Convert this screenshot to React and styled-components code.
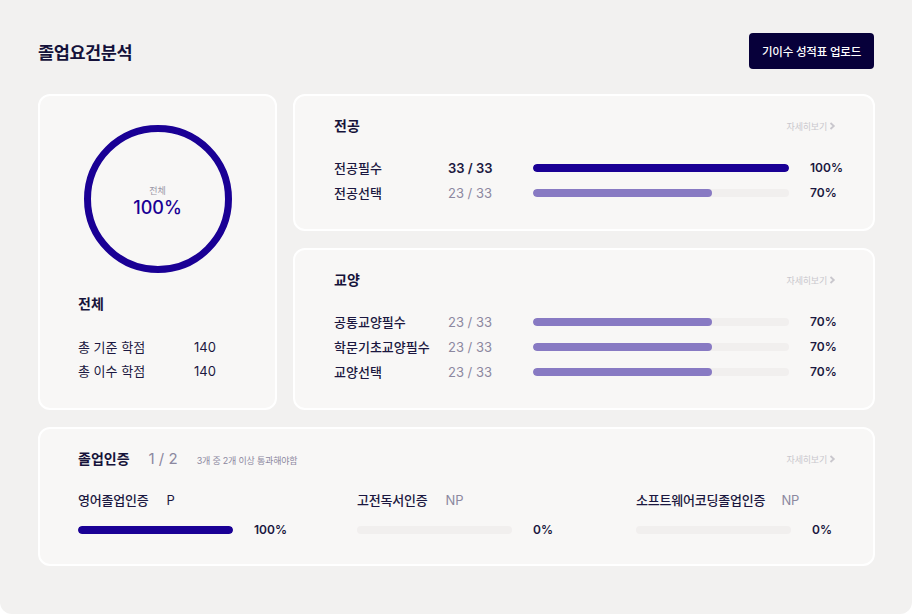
import React from "react";
import styled, { createGlobalStyle } from "styled-components";

const Global = createGlobalStyle`
  html, body { margin: 0; padding: 0; background: #ffffff; }
  body { font-family: Inter, "Noto Sans CJK KR", sans-serif; color: #1b1740; }
  * { box-sizing: border-box; }
`;

const Page = styled.div`
  width: 912px;
  height: 614px;
  background: #f2f1f0;
  border-radius: 0 0 12px 12px;
  padding: 33px 37px 0 38px;
`;

const Header = styled.div`
  display: flex;
  justify-content: space-between;
  align-items: center;
  height: 36px;
  margin-bottom: 25px;
`;

const Title = styled.h1`
  margin: 0;
  font-size: 17.5px;
  font-weight: 600;
  color: #14113a;
  letter-spacing: -0.4px;
`;

const UploadButton = styled.button`
  width: 125px;
  height: 36px;
  margin-right: 1px;
  border: none;
  border-radius: 4px;
  background: #07003a;
  color: #ffffff;
  font-family: inherit;
  font-size: 11.5px;
  font-weight: 500;
  letter-spacing: -0.2px;
`;

const TopGrid = styled.div`
  display: grid;
  grid-template-columns: 239px minmax(0, 1fr);
  gap: 16px;
  margin-bottom: 17px;
`;

const Card = styled.div`
  background: #f8f7f6;
  border: 2px solid #ffffff;
  border-radius: 12px;
  min-width: 0;
`;

const SummaryCard = styled(Card)`
  padding: 29px 38px 0 38px;
  display: flex;
  flex-direction: column;
`;

const RingWrap = styled.div`
  position: relative;
  width: 148px;
  height: 148px;
  align-self: center;
`;

const RingText = styled.div`
  position: absolute;
  inset: 0;
  display: flex;
  flex-direction: column;
  align-items: center;
  justify-content: center;
  padding-top: 5px;
`;

const RingLabel = styled.span`
  font-size: 9px;
  color: #9996a6;
  line-height: 12px;
`;

const RingValue = styled.span`
  font-size: 18px;
  font-weight: 500;
  color: #1a0095;
  line-height: 22px;
`;

const SectionTitle = styled.h2`
  margin: 0;
  font-size: 14px;
  font-weight: 700;
  color: #16133a;
  line-height: 20px;
`;

const SummaryTitle = styled(SectionTitle)`
  margin-top: 21px;
  margin-bottom: 21px;
`;

const SummaryRow = styled.div`
  display: grid;
  grid-template-columns: 116px auto;
  font-size: 13px;
  line-height: 24px;
  color: #1b1740;
`;

const RightColumn = styled.div`
  display: flex;
  flex-direction: column;
  gap: 17px;
  min-width: 0;
`;

const SectionCard = styled(Card)`
  padding: 20px 37px 0 39px;
  height: ${(p) => p.$h}px;
`;

const CardHead = styled.div`
  display: flex;
  justify-content: space-between;
  align-items: center;
  margin-bottom: ${(p) => p.$mb}px;
`;

const More = styled.span`
  display: inline-flex;
  align-items: center;
  gap: 2px;
  font-size: 9px;
  color: #c9c7cd;
  letter-spacing: -0.2px;
`;

const ReqRow = styled.div`
  display: grid;
  grid-template-columns: 114px 85px 256px auto;
  align-items: center;
  height: 25px;
  font-size: 13px;
`;

const ReqLabel = styled.span`
  color: #1b1740;
  font-weight: 500;
`;

const ReqValue = styled.span`
  color: ${(p) => (p.$done ? "#1b1740" : "#8c889f")};
  font-weight: ${(p) => (p.$done ? 600 : 400)};
`;

const Track = styled.div`
  height: 8px;
  border-radius: 4px;
  background: #f1efee;
  overflow: hidden;
  width: ${(p) => p.$w}px;
`;

const Fill = styled.div`
  height: 100%;
  border-radius: 4px;
  background: ${(p) => (p.$done ? "#1a0095" : "#887ac3")};
`;

const Percent = styled.span`
  margin-left: 21px;
  font-size: 12px;
  font-weight: 600;
  color: #1b1740;
`;

const CertCard = styled(Card)`
  height: 139px;
  padding: 20px 37px 0 38px;
`;

const CertHeadLeft = styled.div`
  display: flex;
  align-items: baseline;
`;

const CertCount = styled.span`
  margin-left: 19px;
  font-size: 15px;
  color: #8c889f;
`;

const CertNote = styled.span`
  margin-left: 19px;
  font-size: 9px;
  color: #8c889f;
  letter-spacing: -0.2px;
`;

const CertGrid = styled.div`
  display: grid;
  grid-template-columns: 279px 279px 1fr;
`;

const CertItem = styled.div`
  display: flex;
  flex-direction: column;
  gap: 8px;
`;

const CertName = styled.div`
  display: flex;
  align-items: center;
  font-size: 13px;
  line-height: 18px;
  font-weight: 500;
  color: #1b1740;
  letter-spacing: -0.2px;
`;

const CertStatus = styled.span`
  margin-left: ${(p) => p.$ml}px;
  font-weight: 400;
  color: ${(p) => (p.$pass ? "#1b1740" : "#8c889f")};
`;

const CertBarRow = styled.div`
  display: flex;
  align-items: center;
  height: 25px;
`;

const Chevron = () => (
  <svg width="7" height="8" viewBox="0 0 7 8">
    <path d="M1.5 1 L4.8 4 L1.5 7" fill="none" stroke="#c9c7cd" strokeWidth="1.8" />
  </svg>
);

function Bar({ pct, w }) {
  return (
    <Track $w={w}>
      <Fill $done={pct === 100} style={{ width: `${pct}%` }} />
    </Track>
  );
}

const major = [
  { label: "전공필수", v: "33 / 33", pct: 100 },
  { label: "전공선택", v: "23 / 33", pct: 70 },
];
const liberal = [
  { label: "공통교양필수", v: "23 / 33", pct: 70 },
  { label: "학문기초교양필수", v: "23 / 33", pct: 70 },
  { label: "교양선택", v: "23 / 33", pct: 70 },
];
const certs = [
  { name: "영어졸업인증", status: "P", ml: 18, pct: 100 },
  { name: "고전독서인증", status: "NP", ml: 18, pct: 0 },
  { name: "소프트웨어코딩졸업인증", status: "NP", ml: 16, pct: 0 },
];

function Section({ title, rows, h }) {
  return (
    <SectionCard $h={h}>
      <CardHead $mb={19}>
        <SectionTitle>{title}</SectionTitle>
        <More>
          자세히보기 <Chevron />
        </More>
      </CardHead>
      {rows.map((r) => (
        <ReqRow key={r.label}>
          <ReqLabel>{r.label}</ReqLabel>
          <ReqValue $done={r.pct === 100}>{r.v}</ReqValue>
          <Bar pct={r.pct} w={256} />
          <Percent>{r.pct}%</Percent>
        </ReqRow>
      ))}
    </SectionCard>
  );
}

export default function App() {
  return (
    <>
      <Global />
      <Page>
        <Header>
          <Title>졸업요건분석</Title>
          <UploadButton>기이수 성적표 업로드</UploadButton>
        </Header>
        <TopGrid>
          <SummaryCard>
            <RingWrap>
              <svg width="148" height="148" viewBox="0 0 148 148">
                <circle cx="74" cy="74" r="70.5" fill="none" stroke="#1a0095" strokeWidth="7" />
              </svg>
              <RingText>
                <RingLabel>전체</RingLabel>
                <RingValue>100%</RingValue>
              </RingText>
            </RingWrap>
            <SummaryTitle>전체</SummaryTitle>
            <SummaryRow>
              <span>총 기준 학점</span>
              <span>140</span>
            </SummaryRow>
            <SummaryRow>
              <span>총 이수 학점</span>
              <span>140</span>
            </SummaryRow>
          </SummaryCard>
          <RightColumn>
            <Section title="전공" rows={major} h={137} />
            <Section title="교양" rows={liberal} h={162} />
          </RightColumn>
        </TopGrid>
        <CertCard>
          <CardHead $mb={22}>
            <CertHeadLeft>
              <SectionTitle>졸업인증</SectionTitle>
              <CertCount>1 / 2</CertCount>
              <CertNote>3개 중 2개 이상 통과해야함</CertNote>
            </CertHeadLeft>
            <More>
              자세히보기 <Chevron />
            </More>
          </CardHead>
          <CertGrid>
            {certs.map((c) => (
              <CertItem key={c.name}>
                <CertName>
                  {c.name}
                  <CertStatus $pass={c.status === "P"} $ml={c.ml}>
                    {c.status}
                  </CertStatus>
                </CertName>
                <CertBarRow>
                  <Bar pct={c.pct} w={155} />
                  <Percent>{c.pct}%</Percent>
                </CertBarRow>
              </CertItem>
            ))}
          </CertGrid>
        </CertCard>
      </Page>
    </>
  );
}
